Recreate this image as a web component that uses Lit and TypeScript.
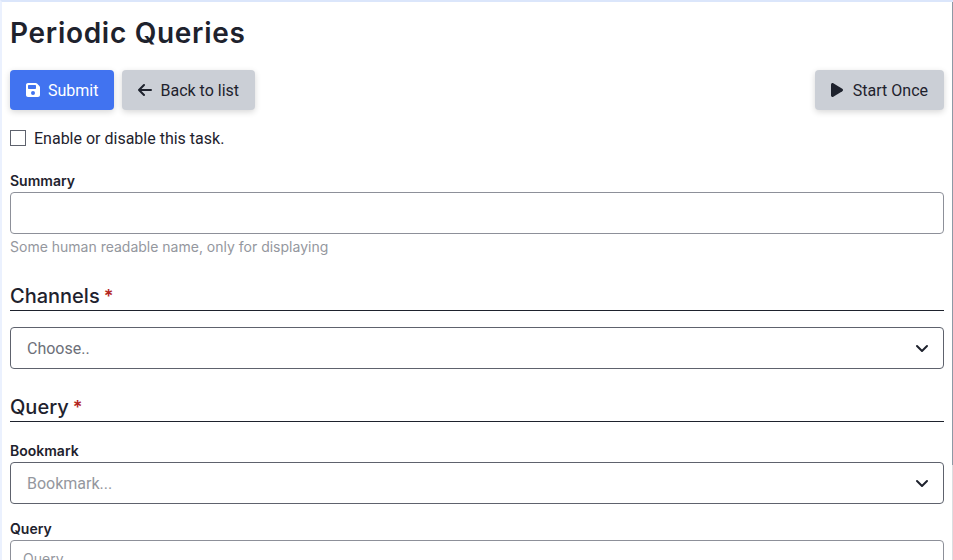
import { LitElement, html, css, svg } from "lit";
import { customElement } from "lit/decorators.js";

const chevron = html`<svg class="chevron" viewBox="0 0 14 14" aria-hidden="true">
  ${svg`<path d="M2 5 L7 10 L12 5" fill="none" stroke="currentColor" stroke-width="2" stroke-linecap="round" stroke-linejoin="round"/>`}
</svg>`;

@customElement("app-root")
export class AppRoot extends LitElement {
  static styles = css`
    :host {
      display: block;
      font-family: Inter, "Liberation Sans", sans-serif;
      font-size: 16px;
      line-height: 24px;
      color: #1e222d;
    }
    *, *::before, *::after { box-sizing: border-box; }
    .shell {
      display: flex;
      height: 100vh;
      overflow: hidden;
      border-top: 2px solid #dbe6fb;
      border-left: 2px solid #ebf1fe;
      background: #fff;
    }
    .page { flex: 1; min-width: 0; overflow: hidden; padding: 12px 8px; }
    .track { width: 1px; background: #dcdde0; }
    .thumb { height: 83%; background: #8d99a5; }
    h1 {
      margin: 0 0 18px;
      font-size: 28px;
      line-height: 38px;
      font-weight: 600;
      letter-spacing: 0.025em;
    }
    .actions { display: flex; gap: 8px; margin-bottom: 16px; }
    .btn {
      display: flex;
      align-items: center;
      gap: 8px;
      height: 40px;
      padding: 0 16px;
      border: 0;
      border-radius: 4px;
      background: #cbcfd6;
      color: inherit;
      font: inherit;
      font-family: Roboto, sans-serif;
      text-decoration: none;
      box-shadow: 0 2px 6px rgba(0, 0, 0, 0.16);
    }
    .caption { padding-top: 2px; }
    .primary { background: #4173f0; color: #fff; }
    .last { margin-left: auto; }
    .icon { width: 14px; height: 16px; fill: currentColor; }
    .check {
      display: flex;
      align-items: center;
      gap: 8px;
      height: 24px;
      margin-bottom: 20px;
      font-family: Roboto, sans-serif;
    }
    .check input {
      appearance: none;
      width: 16px;
      height: 16px;
      margin: 0;
      border: 1px solid #5e626d;
      background: #fff;
    }
    .label { display: block; font-size: 14px; line-height: 22px; font-weight: 600; }
    .field {
      display: block;
      width: 100%;
      height: 42px;
      padding: 6px 12px;
      border: 1px solid #8d9099;
      border-radius: 4px;
      background: #fff;
      font: inherit;
      color: inherit;
    }
    .area { height: 84px; font-size: 14px; resize: none; }
    .area::placeholder { color: #94979e; }
    .hint { margin: 0; font-size: 14px; line-height: 26px; color: #94979e; }
    h2 {
      margin: 26px 0 16px;
      padding-bottom: 1px;
      border-bottom: 1px solid #1e222d;
      font-size: 20px;
      line-height: 24px;
      font-weight: 500;
    }
    .hint + h2 { margin-top: 24px; }
    .star { margin-left: 4px; color: #b3261e; font-size: 18px; font-weight: 600; }
    .picker { position: relative; }
    .picker select {
      appearance: none;
      padding: 2px 16px 0;
      border-color: #5e626d;
      color: #6d7079;
      font-family: Roboto, sans-serif;
    }
    .picker .faint { color: #94979e; }
    .chevron {
      position: absolute;
      right: 15px;
      top: 14px;
      width: 14px;
      height: 14px;
      pointer-events: none;
    }
    .group { margin: 18px 0 14px; }
  `;

  render() {
    return html`
      <div class="shell">
        <main class="page">
          <h1>Periodic Queries</h1>
          <div class="actions">
            <button class="btn primary" type="submit">
              <svg class="icon" viewBox="0 0 448 512" aria-hidden="true">${svg`<path fill-rule="evenodd" d="M64 32C29 32 0 61 0 96V416c0 35 29 64 64 64H384c35 0 64-29 64-64V173c0-17-7-33-19-45L352 51c-12-12-28-19-45-19ZM64 128c0-18 14-32 32-32H288c18 0 32 14 32 32v64c0 18-14 32-32 32H96c-18 0-32-14-32-32ZM224 288a64 64 0 1 1 0 128 64 64 0 0 1 0-128Z"/>`}</svg>
              <span class="caption">Submit</span>
            </button>
            <a class="btn" href="#list">
              <svg class="icon" viewBox="0 0 448 512" aria-hidden="true">${svg`<path d="M192 96 L32 256 L192 416 M32 256 H416" fill="none" stroke="currentColor" stroke-width="64" stroke-linecap="round" stroke-linejoin="round"/>`}</svg>
              <span class="caption">Back to list</span>
            </a>
            <button class="btn last" type="button">
              <svg class="icon" viewBox="0 0 448 512" aria-hidden="true">${svg`<path d="M73 39C58 30 40 30 25 38S0 62 0 80V432c0 18 9 34 25 42s33 8 48-1L361 297c14-9 23-24 23-41s-9-32-23-41Z"/>`}</svg>
              <span class="caption">Start Once</span>
            </button>
          </div>
          <label class="check">
            <input type="checkbox" />
            <span class="caption">Enable or disable this task.</span>
          </label>

          <label class="label" for="summary">Summary</label>
          <input class="field" id="summary" type="text" aria-describedby="summary-hint" />
          <p class="hint" id="summary-hint">Some human readable name, only for displaying</p>

          <h2>Channels<span class="star">*</span></h2>
          <div class="picker">
            <select class="field" aria-label="Channels"><option>Choose..</option></select>
            ${chevron}
          </div>

          <h2>Query<span class="star">*</span></h2>
          <div class="group">
            <label class="label" for="bookmark">Bookmark</label>
            <div class="picker">
              <select class="field faint" id="bookmark"><option>Bookmark...</option></select>
              ${chevron}
            </div>
          </div>
          <label class="label" for="query">Query</label>
          <textarea class="field area" id="query" placeholder="Query"></textarea>
        </main>
        <div class="track"><div class="thumb"></div></div>
      </div>
    `;
  }
}
